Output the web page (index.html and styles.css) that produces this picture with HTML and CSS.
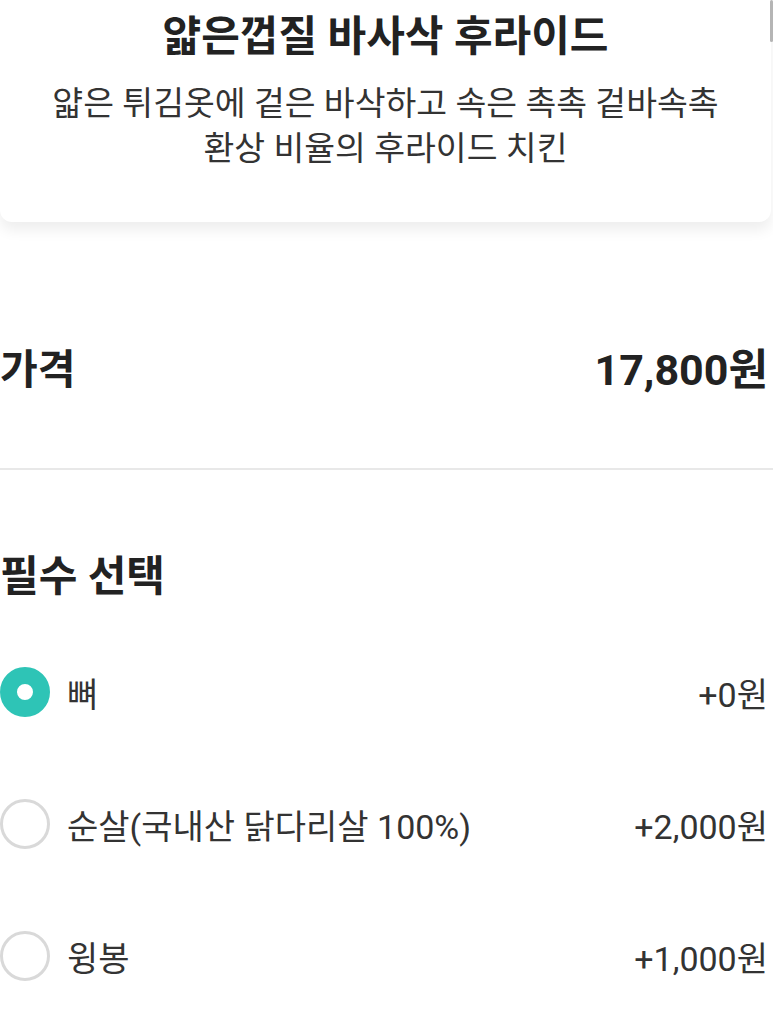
FILE: index.html
```html
<!DOCTYPE html>
<html lang="ko">
<head>
<meta charset="utf-8">
<title>얇은껍질 바사삭 후라이드</title>
<link rel="stylesheet" href="styles.css">
</head>
<body>
<div class="scrollbar"></div>
<div class="card">
  <h1 class="title">얇은껍질 바사삭 후라이드</h1>
  <p class="desc">얇은 튀김옷에 겉은 바삭하고 속은 촉촉 겉바속촉<br>환상 비율의 후라이드 치킨</p>
</div>
<div class="price-row">
  <span class="price-label">가격</span>
  <span class="price-value">17,800원</span>
</div>
<div class="divider"></div>
<h2 class="section-title">필수 선택</h2>
<ul class="options">
  <li class="option">
    <span class="radio checked"></span>
    <span class="opt-label">뼈</span>
    <span class="opt-price">+0원</span>
  </li>
  <li class="option">
    <span class="radio"></span>
    <span class="opt-label">순살(국내산 닭다리살 100%)</span>
    <span class="opt-price">+2,000원</span>
  </li>
  <li class="option">
    <span class="radio"></span>
    <span class="opt-label">윙봉</span>
    <span class="opt-price">+1,000원</span>
  </li>
</ul>
</body>
</html>
```
FILE: styles.css
```css
* { box-sizing: border-box; }
html, body { margin: 0; padding: 0; background: #fff; }
body {
  font-family: Roboto, "Noto Sans CJK KR", sans-serif;
  color: #222;
  width: 773px;
  overflow: hidden;
}
.scrollbar {
  position: absolute;
  top: 0;
  right: 0;
  width: 3px;
  height: 42px;
  background: #b5b5b5;
  border-radius: 2px;
}
.card {
  width: 771px;
  background: #fff;
  border-radius: 0 0 12px 12px;
  box-shadow: 0 8px 14px rgba(0, 0, 0, 0.07);
  text-align: center;
  padding: 12px 0 51px;
}
.title {
  margin: 0;
  font-size: 42px;
  line-height: 50px;
  font-weight: 700;
  color: #222;
}
.desc {
  margin: 19px 0 0;
  font-size: 33.5px;
  line-height: 45px;
  color: #333;
}
.price-row {
  display: flex;
  justify-content: space-between;
  align-items: center;
  padding: 0 5px 0 0;
  margin-top: 120px;
  height: 48px;
  font-weight: 700;
  color: #222;
}
.price-label { font-size: 41px; }
.price-value { font-size: 43px; }
.divider {
  height: 2px;
  background: #e8e8e8;
  margin-top: 78px;
}
.section-title {
  margin: 82px 0 0;
  font-size: 42px;
  line-height: 50px;
  font-weight: 700;
  color: #222;
}
.options {
  list-style: none;
  margin: 24px 0 0;
  padding: 0 5px 0 0;
}
.option {
  display: flex;
  align-items: center;
  height: 132px;
  font-size: 34px;
  color: #333;
}
.radio {
  width: 50px;
  height: 50px;
  border-radius: 50%;
  border: 3px solid #d9d9d9;
  flex: none;
  margin-right: 17px;
}
.radio.checked {
  border: 17px solid #2ec4b6;
  background: #fff;
}
.opt-label { flex: 1; }
.opt-price { flex: none; }
```
